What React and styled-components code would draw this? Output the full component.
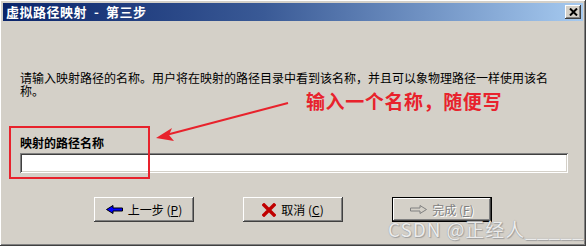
import styled, { createGlobalStyle } from "styled-components";

const GlobalStyle = createGlobalStyle`
	html, body {
		margin: 0;
		padding: 0;
		background: #ffffff;
	}
	body {
		font-family: "Noto Sans CJK SC", "DejaVu Sans", sans-serif;
		font-size: 12px;
	}
`;

export default function App() {
	return (
		<>
			<GlobalStyle />
			<Window>
				<TitleBar>
					<TitleText>{"虚拟路径映射  -  第三步"}</TitleText>
					<CloseButton>
						<svg width="9" height="8" viewBox="0 0 9 8">
							<path d="M1 0.5 L8 7.5 M8 0.5 L1 7.5" stroke="#000" strokeWidth="2" />
						</svg>
					</CloseButton>
				</TitleBar>
				<Content>
					<Description>
						请输入映射路径的名称。用户将在映射的路径目录中看到该名称，并且可以象物理路径一样使用该名称。
					</Description>
					<Field>
						<Label>映射的路径名称</Label>
						<TextInput type="text" />
					</Field>
					<ButtonRow>
						<WizardButton>
							<svg width="17" height="9" viewBox="0 0 17 9">
								<polygon
									points="0.5,4.5 7,0.5 7,3 16.5,3 16.5,6 7,6 7,8.5"
									fill="#0000ff"
									stroke="#000"
									strokeWidth="1"
								/>
							</svg>
							<span>
								上一步 (<u>P</u>)
							</span>
						</WizardButton>
						<WizardButton>
							<svg width="14" height="14" viewBox="0 0 14 14">
								<path d="M2 2 L12 12 M12 2 L2 12" stroke="#c00000" strokeWidth="3.4" strokeLinecap="square" />
							</svg>
							<span>
								取消 (<u>C</u>)
							</span>
						</WizardButton>
						<WizardButton $default $disabled>
							<svg width="17" height="9" viewBox="0 0 17 9">
								<polygon
									points="16.5,4.5 10,0.5 10,3 0.5,3 0.5,6 10,6 10,8.5"
									fill="none"
									stroke="#808080"
									strokeWidth="1"
								/>
							</svg>
							<span>
								完成 (<u>F</u>)
							</span>
						</WizardButton>
					</ButtonRow>
				</Content>

				<Annotation>输入一个名称，随便写</Annotation>
				<Highlight />
				<ArrowOverlay width="587" height="249" viewBox="0 0 587 249">
					<line x1="288" y1="103" x2="166" y2="135" stroke="#e8222c" strokeWidth="2.2" />
					<polygon points="156,138 172,128 169,135 174,141" fill="#e8222c" />
				</ArrowOverlay>
				<Watermark>
					CSDN @正经人<Blank>_____</Blank>
				</Watermark>
			</Window>
		</>
	);
}

const Window = styled.div`
	position: relative;
	width: 586px;
	height: 246px;
	box-sizing: border-box;
	padding: 3px;
	background: #d4d0c8;
	display: flex;
	flex-direction: column;
	box-shadow: inset -1px -1px #404040, inset 1px 1px #ffffff, inset -2px -2px #808080, inset 2px 2px #d4d0c8;
`;

const TitleBar = styled.div`
	height: 18px;
	display: flex;
	align-items: center;
	justify-content: space-between;
	padding: 0 2px 0 3px;
	background: linear-gradient(to right, #0a246a 0%, #3a5a96 45%, #a6caf0 100%);
`;

const TitleText = styled.span`
	color: #ffffff;
	font-weight: 700;
	font-size: 13px;
	line-height: 18px;
	letter-spacing: 0.5px;
	white-space: pre;
`;

const CloseButton = styled.div`
	width: 16px;
	height: 14px;
	box-sizing: border-box;
	display: flex;
	align-items: center;
	justify-content: center;
	background: #d4d0c8;
	box-shadow: inset -1px -1px #404040, inset 1px 1px #ffffff, inset -2px -2px #808080;
`;

const Content = styled.div`
	display: flex;
	flex-direction: column;
	align-items: flex-start;
	padding: 50px 15px 0 17px;
`;

const Description = styled.div`
	width: 540px;
	font-size: 12px;
	line-height: 13px;
	color: #000000;
	text-align: left;
	line-break: strict;
`;

const Field = styled.div`
	display: flex;
	flex-direction: column;
	gap: 3px;
	margin-top: 39px;
`;

const Label = styled.div`
	font-weight: 700;
	font-size: 12px;
	line-height: 14px;
	color: #000000;
`;

const TextInput = styled.input`
	width: 548px;
	height: 20px;
	box-sizing: border-box;
	margin: 0;
	border: none;
	outline: none;
	background: #ffffff;
	box-shadow: inset 1px 1px #808080, inset -1px -1px #ffffff, inset 2px 2px #404040, inset -2px -2px #d4d0c8;
`;

const ButtonRow = styled.div`
	align-self: stretch;
	display: flex;
	justify-content: center;
	gap: 49px;
	margin-top: 24px;
	padding-right: 2px;
`;

const WizardButton = styled.div`
	width: 100px;
	height: 25px;
	box-sizing: border-box;
	display: flex;
	align-items: center;
	justify-content: center;
	gap: 5px;
	font-size: 12px;
	color: ${(p) => (p.$disabled ? "#808080" : "#000000")};
	text-shadow: ${(p) => (p.$disabled ? "1px 1px #ffffff" : "none")};
	background: #d4d0c8;
	border: ${(p) => (p.$default ? "1px solid #000000" : "none")};
	box-shadow: inset -1px -1px #404040, inset 1px 1px #ffffff, inset -2px -2px #808080;
	span {
		white-space: pre;
	}
	u {
		text-decoration: underline;
	}
`;

const Annotation = styled.div`
	position: absolute;
	left: 306px;
	top: 90px;
	font-size: 19px;
	line-height: 22px;
	font-weight: 700;
	color: #e8222c;
	letter-spacing: 0.6px;
`;

const Highlight = styled.div`
	position: absolute;
	left: 9px;
	top: 126px;
	width: 141px;
	height: 53px;
	box-sizing: border-box;
	border: 2px solid #e8222c;
`;

const ArrowOverlay = styled.svg`
	position: absolute;
	left: 0;
	top: 0;
	pointer-events: none;
`;

const Watermark = styled.div`
	position: absolute;
	left: 388px;
	top: 216px;
	font-size: 19px;
	line-height: 24px;
	letter-spacing: 0.9px;
	color: #ececec;
	text-shadow: 0 0 1px #8c8c8c, 1px 1px 1px #a0a0a0;
	white-space: pre;
`;

const Blank = styled.span`
	letter-spacing: 0;
	font-size: 21px;
`;
